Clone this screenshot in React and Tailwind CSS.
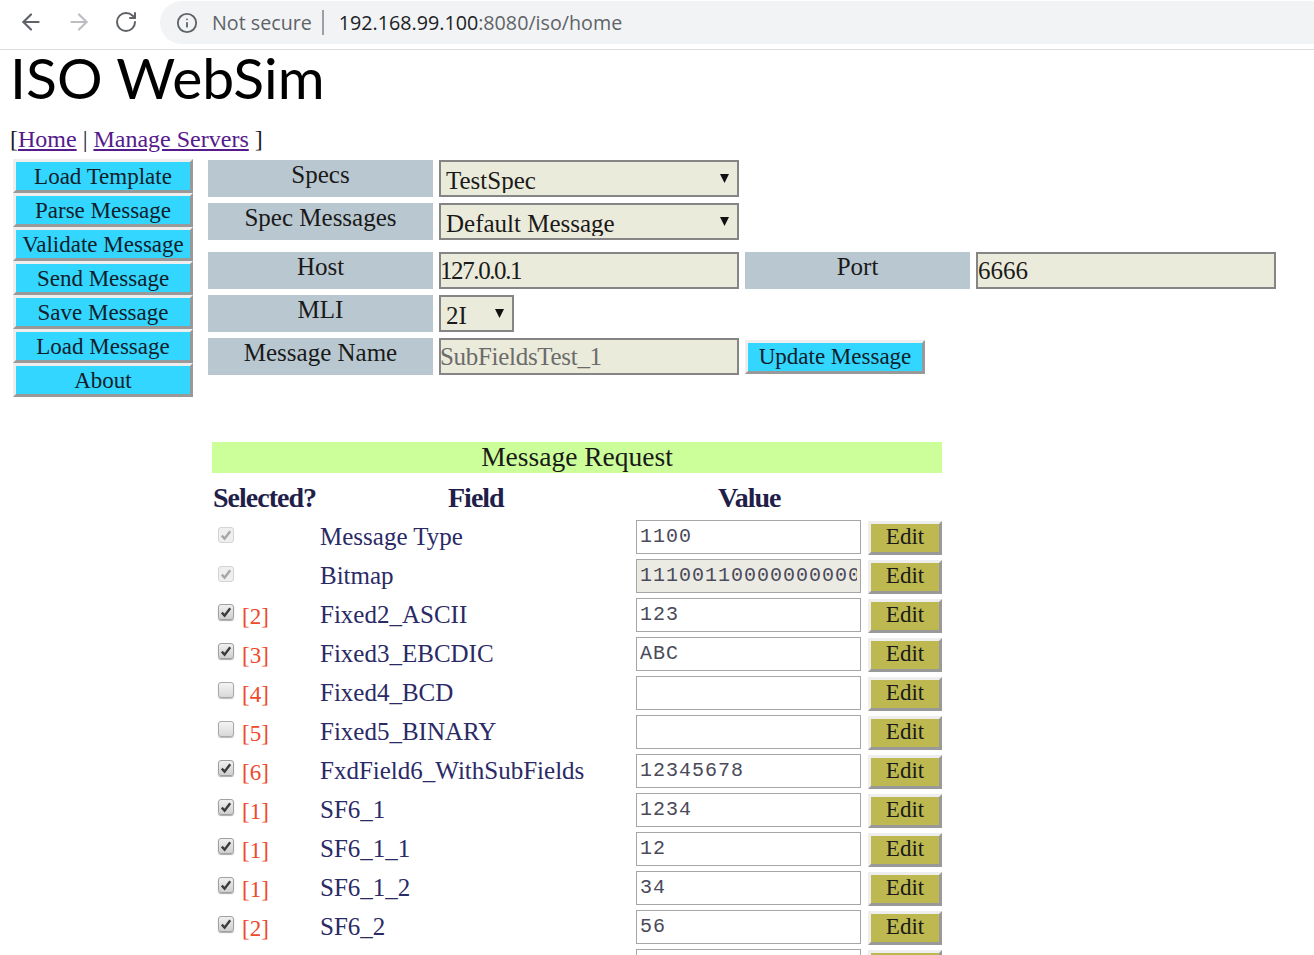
import React from "react";
import { ArrowLeft, ArrowRight, RotateCw, Info } from "lucide-react";

const serif = "font-['Liberation_Serif',serif]";
const bevel = "border-[3px] border-t-[#eeeeee] border-l-[#eeeeee] border-b-[#999999] border-r-[#999999]";

const side = ["Load Template", "Parse Message", "Validate Message", "Send Message", "Save Message", "Load Message", "About"];

const rows = [
  { c: "off", tag: "", name: "Message Type", val: "1100" },
  { c: "off", tag: "", name: "Bitmap", val: "11100110000000000000", ro: true },
  { c: "on", tag: "[2]", name: "Fixed2_ASCII", val: "123" },
  { c: "on", tag: "[3]", name: "Fixed3_EBCDIC", val: "ABC" },
  { c: "no", tag: "[4]", name: "Fixed4_BCD", val: "" },
  { c: "no", tag: "[5]", name: "Fixed5_BINARY", val: "" },
  { c: "on", tag: "[6]", name: "FxdField6_WithSubFields", val: "12345678" },
  { c: "on", tag: "[1]", name: "SF6_1", val: "1234" },
  { c: "on", tag: "[1]", name: "SF6_1_1", val: "12" },
  { c: "on", tag: "[1]", name: "SF6_1_2", val: "34" },
  { c: "on", tag: "[2]", name: "SF6_2", val: "56" },
  { c: "", tag: "", name: "", val: "", partial: true },
];

function Check({ state }) {
  if (state === "") return null;
  if (state === "no") {
    return <span className="block w-[16px] h-[16px] rounded-[3px] border border-[#a8a8a8] bg-gradient-to-b from-[#f4f4f4] to-[#d8d8d8] shadow-[0_1px_1px_#bbbbbb]" />;
  }
  const off = state === "off";
  return (
    <span className={off
      ? "flex items-center justify-center w-[16px] h-[16px] rounded-[3px] border border-[#d4d4d4] bg-[#efefef]"
      : "flex items-center justify-center w-[16px] h-[16px] rounded-[3px] border border-[#a0a0a0] bg-gradient-to-b from-[#f0f0f0] to-[#cfcfcf] shadow-[0_1px_1px_#aaaaaa]"}>
      <svg width="12" height="12" viewBox="0 0 12 12">
        <path d="M1.8 6.6 L4.6 9.6 L10.2 2.2" fill="none" stroke={off ? "#a6a6a6" : "#3c3c3c"} strokeWidth="2.4" />
      </svg>
    </span>
  );
}

function Label({ children }) {
  return <div className="w-[225px] h-[37px] shrink-0 bg-[#b9c7d0] text-center text-[25px] leading-[30px] text-[#1a1a1a]">{children}</div>;
}

function Select({ value, w }) {
  return (
    <div className={`relative ${w} h-[37px] shrink-0`}>
      <select defaultValue={value} className={`appearance-none block w-full h-full border-[2px] border-[#858585] bg-[#ebebdb] pl-[5px] pb-[2px] text-[25px] text-[#1a1a1a] ${serif}`}>
        <option>{value}</option>
      </select>
      <svg className="absolute right-[10px] top-[14px]" width="9" height="9" viewBox="0 0 9 9"><path d="M0 0H9L4.5 9Z" fill="#111111" /></svg>
    </div>
  );
}

function TextField({ value, muted, extra = "" }) {
  return (
    <input readOnly defaultValue={value}
      className={`block w-[300px] h-[37px] shrink-0 border-[2px] border-[#858585] bg-[#ebebdb] px-0 text-[25px] outline-none ${serif} ${extra} ${muted ? "text-[#6b6b6b]" : "text-[#1a1a1a]"}`} />
  );
}

export default function App() {
  return (
    <div className={`h-[955px] overflow-hidden bg-white ${serif}`}>
      <header className="h-[50px] flex items-start border-b border-[#dadce0] font-['Open_Sans',sans-serif]">
        <div className="flex items-center w-[160px] h-[44px] pl-[18px] gap-[22px]">
          <ArrowLeft size={26} strokeWidth={2} className="text-[#5f6368]" />
          <ArrowRight size={26} strokeWidth={2} className="text-[#bcbec1]" />
          <RotateCw size={24} strokeWidth={2} className="text-[#5f6368]" />
        </div>
        <div className="flex-1 h-[43px] mt-px flex items-center bg-[#f1f3f4] rounded-l-[22px] pl-[16px]">
          <Info size={22} strokeWidth={2} className="text-[#5f6368]" />
          <span className="ml-[14px] text-[19.7px] text-[#5f6368]">Not secure</span>
          <span className="ml-[10px] w-[2px] h-[25px] bg-[#9aa0a6]" />
          <span className="ml-[15px] text-[19.7px] text-[#202124]">192.168.99.100<span className="text-[#5f6368]">:8080/iso/home</span></span>
        </div>
      </header>

      <h1 className="h-[62px] pl-[10px] text-[57px] leading-[54px] font-['Lato',sans-serif] font-normal text-black">ISO WebSim</h1>

      <nav className="h-[48px] pl-[10px] pt-[13px] text-[24px] leading-[28px] text-[#1a1a2a]">
        [<a href="#" className="underline text-[#551a8b]">Home</a> | <a href="#" className="underline text-[#551a8b]">Manage Servers</a> ]
      </nav>

      <div className="flex items-start">
        <div className="flex flex-col ml-[13px] w-[180px] -mt-px">
          {side.map((s) => (
            <button key={s} className={`h-[34px] w-full px-0 pt-px ${bevel} bg-[#33d6ff] text-[23px] leading-[24px] whitespace-nowrap text-[#10202a]`}>{s}</button>
          ))}
        </div>

        <div className="ml-[15px] flex flex-col">
          <div className="flex gap-[6px]"><Label>Specs</Label><Select value="TestSpec" w="w-[300px]" /></div>
          <div className="flex gap-[6px] mt-[6px]"><Label>Spec Messages</Label><Select value="Default Message" w="w-[300px]" /></div>
          <div className="flex gap-[6px] mt-[12px]"><Label>Host</Label><TextField value="127.0.0.1" extra="tracking-[-1.4px] indent-[-1px]" /><Label>Port</Label><TextField value="6666" /></div>
          <div className="flex gap-[6px] mt-[6px]"><Label>MLI</Label><Select value="2I" w="w-[75px]" /></div>
          <div className="flex gap-[6px] mt-[6px]">
            <Label>Message Name</Label>
            <TextField value="SubFieldsTest_1" muted extra="tracking-[-0.3px] indent-[-1px]" />
            <button className={`w-[180px] h-[34px] mt-[2px] px-0 ${bevel} bg-[#33d6ff] text-[23px] leading-[24px] text-[#10202a]`}>Update Message</button>
          </div>

          <section className="ml-[4px] mt-[67px] w-[730px]">
            <h2 className="h-[31px] bg-[#ccff99] text-center text-[27.5px] leading-[29px] font-normal text-[#1a1a1a]">Message Request</h2>
            <div className="grid grid-cols-[108px_316px_232px_74px] h-[47px] text-[#1f1f4a] text-[28px] leading-[50px] font-semibold tracking-[-1px]">
              <div className="whitespace-nowrap pl-px">Selected?</div>
              <div className="pl-[128px]">Field</div>
              <div className="pl-[82px]">Value</div>
              <div />
            </div>
            {rows.map((r, i) => (
              <div key={i} className="grid grid-cols-[108px_316px_232px_74px] h-[39px]">
                <div className="flex items-start">
                  <span className={r.c === "off" ? "ml-[6px] mt-[7px]" : "ml-[6px] mt-[6px]"}><Check state={r.c} /></span>
                  {r.tag && <span className="ml-[8px] mt-[5px] text-[23px] leading-[28px] text-[#ee4a2c]">{r.tag}</span>}
                </div>
                <div className="pt-[3px] text-[25px] leading-[28px] text-[#2a2a66] whitespace-nowrap">{r.name}</div>
                <div>
                  <input readOnly defaultValue={r.val}
                    className={`block w-[225px] h-[34px] border border-[#a6a6a6] px-[3px] pb-[2px] font-['Liberation_Mono',monospace] text-[20px] tracking-[1px] text-[#4a4a5a] outline-none ${r.ro ? "bg-[#ebebe4]" : "bg-white"}`} />
                </div>
                <div>
                  <button className={`block w-[74px] h-[34px] mt-px px-0 pb-[2px] ${bevel} bg-[#bdb84f] text-[23px] leading-[24px] text-[#1a1a1a]`}>{r.partial ? "" : "Edit"}</button>
                </div>
              </div>
            ))}
          </section>
        </div>
      </div>
    </div>
  );
}
